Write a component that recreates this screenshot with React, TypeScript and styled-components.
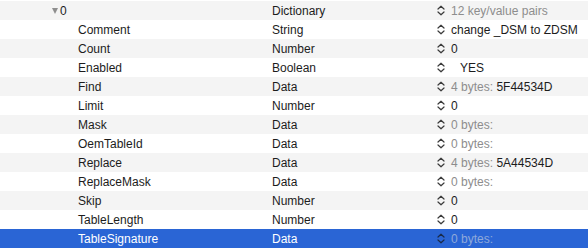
import { createGlobalStyle } from 'styled-components';
import styled from 'styled-components';

const GlobalStyle = createGlobalStyle`
  html, body {
    margin: 0;
    padding: 0;
    background: #ffffff;
  }
  body {
    font-family: "Liberation Sans", Arial, sans-serif;
    font-size: 12px;
    color: #1c1c1c;
  }
`

const Outline = styled.div`
  width: 588px;
  height: 248px;
  padding-top: 1px;
  box-sizing: border-box;
  overflow: hidden;
`

const Row = styled.div<{ $odd: boolean; $selected?: boolean }>`
  display: grid;
  grid-template-columns: 272px 165px 1fr;
  height: 19px;
  align-items: center;
  background-color: ${p => p.$selected ? '#2a65d5' : p.$odd ? '#ffffff' : '#f4f4f4'};
  color: ${p => p.$selected ? '#ffffff' : '#1c1c1c'};
`

const KeyCell = styled.div<{ $indent: number }>`
  display: flex;
  align-items: center;
  padding-left: ${p => p.$indent}px;
  white-space: nowrap;
`

const Disclosure = styled.span`
  display: inline-block;
  width: 0;
  height: 0;
  border-left: 3.5px solid transparent;
  border-right: 3.5px solid transparent;
  border-top: 6px solid #8e8e8e;
  margin-right: 2px;
  margin-top: 1px;
`

const TypeCell = styled.div`
  white-space: nowrap;
`

const ValueCell = styled.div`
  display: flex;
  align-items: center;
  white-space: nowrap;
`

const Stepper = styled.svg<{ $selected?: boolean }>`
  width: 8px;
  height: 11px;
  margin-right: 6px;
  margin-top: -1px;
  color: ${p => p.$selected ? '#1a2a48' : '#3a3a3a'};
`

const Muted = styled.span<{ $selected?: boolean }>`
  color: ${p => p.$selected ? '#8fa9da' : '#8d8d8d'};
`

const Bool = styled.span`
  padding-left: 9px;
`

type Item = {
  key: string;
  type: string;
  value: React.ReactNode;
}

function bytes(n: number, hex?: string, selected?: boolean) {
  return (
    <>
      <Muted $selected={selected}>{n} bytes:</Muted>
      {hex && <>&nbsp;{hex}</>}
    </>
  )
}

const items: Item[] = [
  { key: 'Comment', type: 'String', value: 'change _DSM to ZDSM' },
  { key: 'Count', type: 'Number', value: '0' },
  { key: 'Enabled', type: 'Boolean', value: <Bool>YES</Bool> },
  { key: 'Find', type: 'Data', value: bytes(4, '5F44534D') },
  { key: 'Limit', type: 'Number', value: '0' },
  { key: 'Mask', type: 'Data', value: bytes(0) },
  { key: 'OemTableId', type: 'Data', value: bytes(0) },
  { key: 'Replace', type: 'Data', value: bytes(4, '5A44534D') },
  { key: 'ReplaceMask', type: 'Data', value: bytes(0) },
  { key: 'Skip', type: 'Number', value: '0' },
  { key: 'TableLength', type: 'Number', value: '0' },
]

function StepIcon({ selected }: { selected?: boolean }) {
  return (
    <Stepper $selected={selected} viewBox="0 0 8 11" fill="none">
      <path d="M1 4 L4 1.2 L7 4" stroke="currentColor" strokeWidth="1.2" strokeLinecap="round" strokeLinejoin="round" />
      <path d="M1 7 L4 9.8 L7 7" stroke="currentColor" strokeWidth="1.2" strokeLinecap="round" strokeLinejoin="round" />
    </Stepper>
  )
}

export default function App() {
  return (
    <>
      <GlobalStyle />
      <Outline>
        <Row $odd={false}>
          <KeyCell $indent={52}><Disclosure />0</KeyCell>
          <TypeCell>Dictionary</TypeCell>
          <ValueCell><StepIcon /><Muted>12 key/value pairs</Muted></ValueCell>
        </Row>
        {items.map((el, i) => (
          <Row key={el.key} $odd={i % 2 === 0}>
            <KeyCell $indent={78}>{el.key}</KeyCell>
            <TypeCell>{el.type}</TypeCell>
            <ValueCell><StepIcon />{el.value}</ValueCell>
          </Row>
        ))}
        <Row $odd={false} $selected>
          <KeyCell $indent={78}>TableSignature</KeyCell>
          <TypeCell>Data</TypeCell>
          <ValueCell><StepIcon selected />{bytes(0, undefined, true)}</ValueCell>
        </Row>
      </Outline>
    </>
  )
}
